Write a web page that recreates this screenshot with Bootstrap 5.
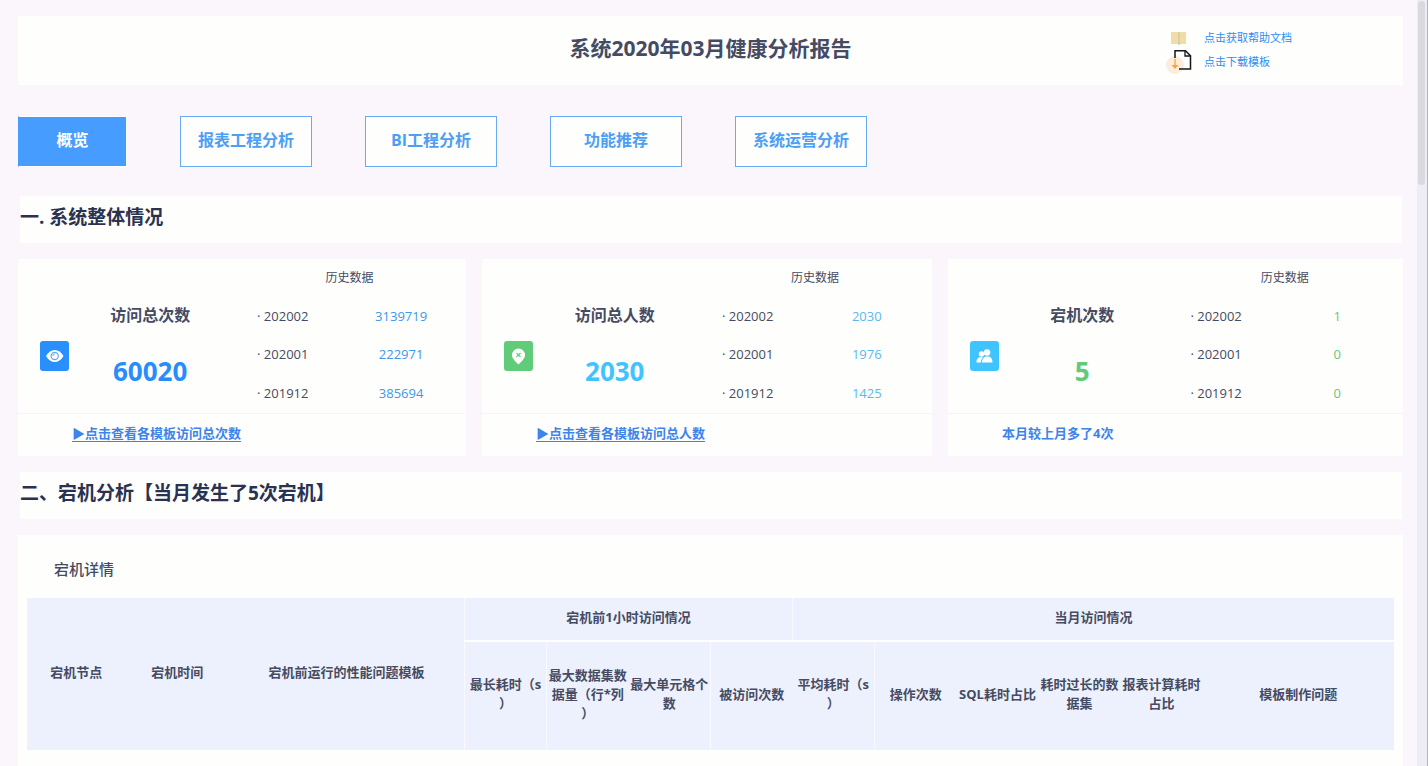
<!DOCTYPE html>
<html lang="zh-CN">
<head>
<meta charset="utf-8">
<meta name="viewport" content="width=device-width, initial-scale=1">
<title>系统2020年03月健康分析报告</title>
<link rel="stylesheet" href="https://cdn.jsdelivr.net/npm/bootstrap@5.3.0/dist/css/bootstrap.min.css">
<style>
  body {
    background: #faf6fc;
    color: #454b63;
    font-family: "Open Sans", "Noto Sans CJK SC", sans-serif;
    font-size: 13px;
    line-height: 19px;
    text-spacing-trim: space-all;
  }
  a { color: #2b8df5; }
  .page { padding: 16px 14px 0 18px; }
  .surface { background: #fefefd; }

  /* Report header */
  .report-head { display: grid; grid-template-columns: 1fr auto 1fr; min-height: 69px; }
  .report-title { font-size: 21px; line-height: 32px; padding-top: 16px; }
  .help-links { font-size: 11px; line-height: 24px; padding: 10px 111px 0 0; }
  .help-links svg { width: 26px; height: 24px; margin-right: 12px; }

  /* Tabs */
  .tabs { gap: 53px; margin: 31px 0 29px; }
  .tab-btn {
    width: 132px; height: 51px; padding: 0 0 3px; border: 1px solid #68abf3; border-radius: 0;
    background: #fefefd; color: #4d9ff5; font-size: 16px; font-weight: 700;
  }
  .tab-btn.active { width: 109px; background: #469cff; color: #fff; border-color: #fefefd #fefefd #fefefd #469cff; }

  .section-title {
    color: #2a3250; font-size: 19px; line-height: 43px; font-weight: 700;
    padding-bottom: 4px; margin: 0 1px 16px 2px;
  }

  /* Summary cards */
  .stats { display: grid; grid-template-columns: 448fr 450fr 455fr; gap: 16px; margin-bottom: 16px; }
  .stat-body { min-height: 154px; }
  .stat-icon { width: 16%; padding: 82px 0 0 22px; }
  .stat-icon svg { width: 29px; height: 30px; display: block; }
  .stat-main { width: 27%; padding-top: 44px; }
  .stat-name { font-size: 16px; line-height: 24px; }
  .stat-value { font-size: 26px; line-height: 36px; margin-top: 26px; }
  .history { width: 52%; table-layout: fixed; margin-left: auto; }
  .history caption { caption-side: top; padding: 0; color: inherit; font-size: 12px; line-height: 38px; text-align: center; }
  .history th { width: 46%; height: 38px; padding: 0 0 0 24px; font-weight: 400; }
  .history td { padding: 0 4px 0 0; text-align: center; }
  .stat-foot { border-top: 1px solid #f9f2f9; padding: 10px 0 13px 54px; font-weight: 700; color: #3d84ea; }
  .stat-foot a { color: inherit; text-underline-offset: 3px; }
  .blue { color: #288dfb; } .blue-num { color: #3b98ee; }
  .sky { color: #40c4ff; } .sky-num { color: #56baf7; }
  .green { color: #60cb78; }

  /* Crash detail table */
  .detail { padding: 23px 9px 40px; }
  .detail-title { font-size: 15px; line-height: 22px; padding-left: 27px; margin-bottom: 18px; font-weight: 500; }
  .crash { table-layout: fixed; width: 100%; border-collapse: collapse; background: #edf1fd; }
  .crash th { padding: 0 1px; text-align: center; line-break: anywhere; border-left: 1px solid #f8faff; }
  .crash .plain { border-left: 0; }
  .crash .group-row th { height: 43px; border-bottom: 2px solid #fefefe; padding-bottom: 3px; }
  .crash .group-row th[rowspan] { border-bottom: 0; padding-bottom: 3px; }
  .crash .name-row th { height: 109px; padding-bottom: 4px; }

  /* Scroll rail at the window's edge */
  .rail { width: 11px; background: #eeecf4; border-right: 1px solid #b4b2bb; }
  .rail-thumb { height: 24vh; margin: 1px 2px 0 1px; background: #dad9df; border-radius: 4px; }
</style>
</head>
<body>
<div class="d-flex vh-100 overflow-hidden">
  <main class="page flex-grow-1">
    <header class="report-head surface">
      <span></span>
      <h1 class="report-title fw-bold m-0">系统2020年03月健康分析报告</h1>
      <nav class="help-links d-flex flex-column align-items-end" aria-label="帮助">
        <div>
          <a class="d-flex align-items-center text-decoration-none" href="#help">
            <svg viewBox="0 0 26 24" aria-hidden="true"><path d="M5 6h7l1 1 1-1h6v12h-6l-1 1-1-1H5z" fill="#f2dca6"/><path d="M13 6v13" stroke="#b9bfb4"/></svg>点击获取帮助文档</a>
          <a class="d-flex align-items-center text-decoration-none" href="#template">
            <svg viewBox="0 0 26 24" aria-hidden="true"><circle cx="9" cy="15" r="9" fill="#fdebdc"/><path d="M9 8V.8h10.500l5 5V19H13" fill="none" stroke="#15131c" stroke-width="1.500"/><path d="M19 1v5h5" fill="none" stroke="#15131c" stroke-width="1.300"/><path d="M9 9v9" stroke="#f7a537" stroke-width="1.300"/><path d="M5.500 15h7L9 19z" fill="#f7a537"/></svg>点击下载模板</a>
        </div>
      </nav>
    </header>

    <nav class="tabs d-flex" aria-label="报告章节">
      <button type="button" class="tab-btn active">概览</button>
      <button type="button" class="tab-btn">报表工程分析</button>
      <button type="button" class="tab-btn">BI工程分析</button>
      <button type="button" class="tab-btn">功能推荐</button>
      <button type="button" class="tab-btn">系统运营分析</button>
    </nav>

    <h2 class="section-title surface">一. 系统整体情况</h2>
    <section class="stats">
      <article class="surface">
        <div class="stat-body d-flex">
          <div class="stat-icon"><svg viewBox="0 0 29 30" aria-hidden="true"><rect width="29" height="30" rx="3" fill="#288ffc"/><path d="M6 15c4.500-8 13-8 17.500 0-4.500 8-13 8-17.500 0z" fill="#fff"/><circle cx="14.700" cy="15" r="3.600" fill="#fff" stroke="#5ea9f5" stroke-width="1.200"/><path d="M12.800 15a2 2 0 0 1 2-2" fill="none" stroke="#5ea9f5"/></svg></div>
          <div class="stat-main text-center">
            <h3 class="stat-name fw-bold m-0">访问总次数</h3>
            <div class="stat-value fw-bold blue">60020</div>
          </div>
          <table class="history">
            <caption>历史数据</caption>
            <tr><th scope="row">· 202002</th><td class="blue-num">3139719</td></tr>
            <tr><th scope="row">· 202001</th><td class="blue-num">222971</td></tr>
            <tr><th scope="row">· 201912</th><td class="blue-num">385694</td></tr>
          </table>
        </div>
        <div class="stat-foot"><a href="#visits">▶点击查看各模板访问总次数</a></div>
      </article>

      <article class="surface">
        <div class="stat-body d-flex">
          <div class="stat-icon"><svg viewBox="0 0 29 30" aria-hidden="true"><rect width="29" height="30" rx="3" fill="#60cb78"/><path d="M14.500 23.500C11 20 8 17.500 8 14a6.500 6.500 0 0 1 13 0c0 3.500-3 6-6.500 9.500z" fill="#fff"/><path d="M12.500 12l4 4m0-4l-4 4" stroke="#60cb78" stroke-width="1.100"/></svg></div>
          <div class="stat-main text-center">
            <h3 class="stat-name fw-bold m-0">访问总人数</h3>
            <div class="stat-value fw-bold sky">2030</div>
          </div>
          <table class="history">
            <caption>历史数据</caption>
            <tr><th scope="row">· 202002</th><td class="sky-num">2030</td></tr>
            <tr><th scope="row">· 202001</th><td class="sky-num">1976</td></tr>
            <tr><th scope="row">· 201912</th><td class="sky-num">1425</td></tr>
          </table>
        </div>
        <div class="stat-foot"><a href="#visitors">▶点击查看各模板访问总人数</a></div>
      </article>

      <article class="surface">
        <div class="stat-body d-flex">
          <div class="stat-icon"><svg viewBox="0 0 29 30" aria-hidden="true"><rect width="29" height="30" rx="3" fill="#40c4ff"/><g fill="#fff"><circle cx="11.500" cy="13" r="2.700"/><path d="M6.500 21.500c0-4 1.500-5.300 4.500-5.300 1 0 1.500.1 2 .4-1.500 1.200-2 2.600-2 4.900z"/><circle cx="17" cy="11.500" r="3.300"/><path d="M12 21.500c0-4.300 2-6 5.200-6s5.300 1.700 5.300 6z"/></g></svg></div>
          <div class="stat-main text-center">
            <h3 class="stat-name fw-bold m-0">宕机次数</h3>
            <div class="stat-value fw-bold green">5</div>
          </div>
          <table class="history">
            <caption>历史数据</caption>
            <tr><th scope="row">· 202002</th><td class="green">1</td></tr>
            <tr><th scope="row">· 202001</th><td class="green">0</td></tr>
            <tr><th scope="row">· 201912</th><td class="green">0</td></tr>
          </table>
        </div>
        <div class="stat-foot">本月较上月多了4次</div>
      </article>
    </section>

    <h2 class="section-title surface">二、宕机分析【当月发生了5次宕机】</h2>
    <section class="detail surface">
      <h3 class="detail-title">宕机详情</h3>
      <table class="crash">
        <colgroup>
          <col style="width:7.2%"><col style="width:7.6%"><col style="width:17.2%">
          <col span="9" style="width:6%"><col style="width:14%">
        </colgroup>
        <thead>
          <tr class="group-row">
            <th class="plain" rowspan="2">宕机节点</th>
            <th class="plain" rowspan="2">宕机时间</th>
            <th class="plain" rowspan="2">宕机前运行的性能问题模板</th>
            <th colspan="4">宕机前1小时访问情况</th>
            <th colspan="6">当月访问情况</th>
          </tr>
          <tr class="name-row">
            <th>最长耗时（s）</th>
            <th>最大数据集数据量（行*列）</th>
            <th class="plain">最大单元格个数</th>
            <th>被访问次数</th>
            <th class="plain">平均耗时（s）</th>
            <th>操作次数</th>
            <th class="plain">SQL耗时占比</th>
            <th class="plain">耗时过长的数据集</th>
            <th class="plain">报表计算耗时占比</th>
            <th class="plain">模板制作问题</th>
          </tr>
        </thead>
      </table>
    </section>
  </main>
  <div class="rail flex-shrink-0" aria-hidden="true"><div class="rail-thumb"></div></div>
</div>
<script src="https://cdn.jsdelivr.net/npm/bootstrap@5.3.0/dist/js/bootstrap.bundle.min.js"></script>
</body>
</html>
